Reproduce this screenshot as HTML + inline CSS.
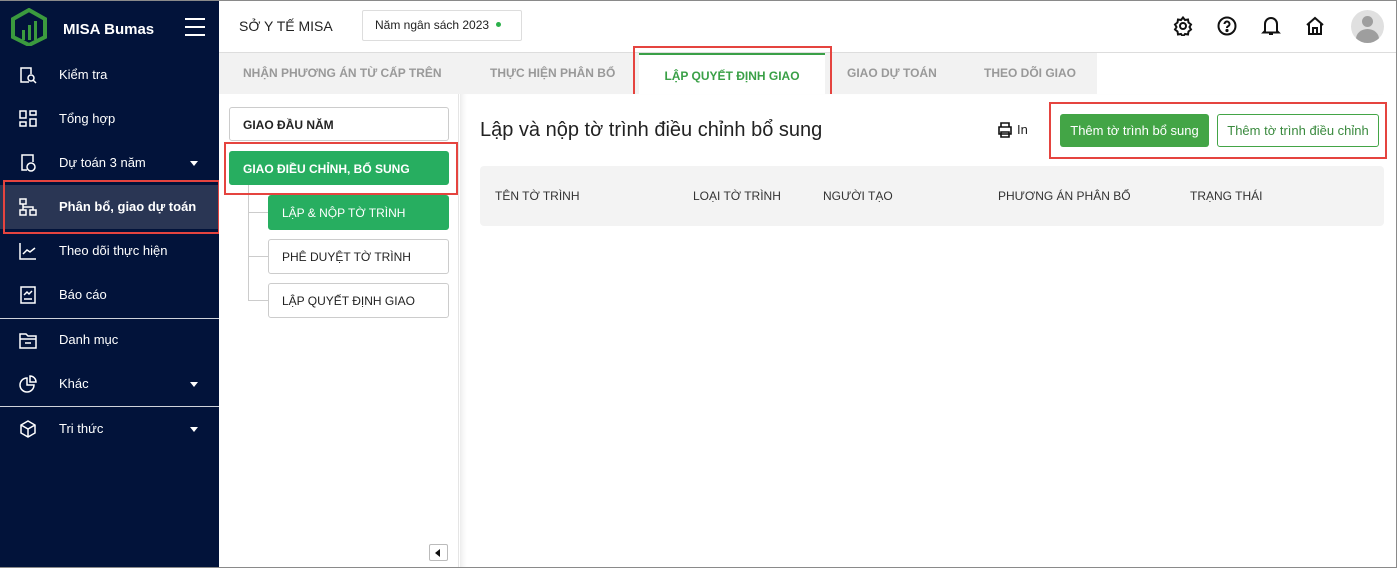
<!DOCTYPE html>
<html><head><meta charset="utf-8"><style>
*{box-sizing:border-box;margin:0;padding:0}
body{width:1397px;height:568px;overflow:hidden;font-family:"Liberation Sans",sans-serif;background:#fff;position:relative}
.frame{position:absolute;left:0;top:0;width:1397px;height:568px;border:1px solid #8a8a8a;border-left:none;pointer-events:none;z-index:10}
.side{position:absolute;left:0;top:0;width:219px;height:568px;background:#02133a;color:#fff}
.logo{position:absolute;left:10px;top:8px}
.brand{position:absolute;left:63px;top:21px;font-weight:bold;font-size:15px}
.ham{position:absolute;left:185px;top:18px;width:20px}
.ham i{display:block;height:2px;background:#fff;margin-bottom:6px}
.item{position:absolute;left:0;width:219px;height:44px;font-size:13px;line-height:44px;padding-left:59px}
.item svg{position:absolute;left:19px;top:13px}
.item .car{position:absolute;left:190px;top:20px;border:4px solid transparent;border-top:5px solid #fff}
.sel{background:#2a3654;font-weight:bold}
.sep{position:absolute;left:0;width:219px;height:1px;background:#cfd3da}
.red{position:absolute;border:2px solid #e5443f}
.top{position:absolute;left:219px;top:0;right:0;height:53px;border-bottom:1px solid #ddd;background:#fff}
.tabs{position:absolute;left:219px;top:53px;right:0;height:41px;background:#f2f2f2}
.tab{position:absolute;top:0;height:41px;line-height:40px;font-size:12px;color:#999;font-weight:bold}
.lp{position:absolute;left:219px;top:94px;width:240px;height:474px;background:#fff;border-right:1px solid #e5e5e5}
.btn{position:absolute;border:1px solid #ccc;border-radius:3px;font-size:12px;padding-left:13px;background:#fff;color:#222}
.g{background:#27ae60;color:#fff;border-color:#27ae60;font-weight:bold}
.main{position:absolute;left:460px;top:94px;width:924px;height:474px;background:#fff;box-shadow:inset 6px 0 6px -4px #e8e8e8}
.th{position:absolute;top:189px;font-size:12px;color:#333}
</style></head><body>
<div class="side">
 <svg class="logo" width="38" height="38" viewBox="0 0 38 38"><path d="M19 2 L35 11 V29 L19 37 L3 29 V11 Z" fill="none" stroke="#3b9a3e" stroke-width="4"/><rect x="12" y="22" width="3" height="10" fill="#3b9a3e"/><rect x="18" y="17" width="3" height="15" fill="#3b9a3e"/><rect x="24" y="13" width="3" height="19" fill="#3b9a3e"/></svg>
 <div class="brand">MISA Bumas</div>
 <div class="ham"><i></i><i></i><i></i></div>
 <div class="item" style="top:53px"><svg width="18" height="18" fill="none" stroke="#fff" stroke-width="1.5"><path d="M10 16H2V2h10v6"/><circle cx="12" cy="12" r="3"/><path d="M14 14l3 3"/></svg>Kiểm tra</div>
 <div class="item" style="top:97px"><svg width="18" height="18" fill="none" stroke="#fff" stroke-width="1.5"><rect x="1" y="1" width="6" height="7"/><rect x="11" y="1" width="6" height="4"/><rect x="1" y="12" width="6" height="4"/><rect x="11" y="9" width="6" height="7"/></svg>Tổng hợp</div>
 <div class="item" style="top:141px"><svg width="18" height="18" fill="none" stroke="#fff" stroke-width="1.5"><path d="M8 16H3V1h11v7"/><circle cx="12" cy="13" r="4"/></svg>Dự toán 3 năm<span class="car"></span></div>
 <div class="item sel" style="top:185px"><svg width="18" height="18" fill="none" stroke="#fff" stroke-width="1.5"><rect x="1" y="1" width="6" height="5"/><rect x="1" y="12" width="6" height="5"/><rect x="11" y="12" width="6" height="5"/><path d="M4 6v6M4 9h10v3"/></svg>Phân bổ, giao dự toán</div>
 <div class="item" style="top:229px"><svg width="18" height="18" fill="none" stroke="#fff" stroke-width="1.5"><path d="M1 1v16h16M4 12l4-4 3 2 5-4"/></svg>Theo dõi thực hiện</div>
 <div class="item" style="top:273px"><svg width="18" height="18" fill="none" stroke="#fff" stroke-width="1.5"><rect x="2" y="1" width="14" height="16"/><path d="M5 9l3-3 2 2 3-3M5 13h8"/></svg>Báo cáo</div>
 <div class="sep" style="top:318px"></div>
 <div class="item" style="top:318px"><svg width="18" height="18" fill="none" stroke="#fff" stroke-width="1.5"><path d="M1 3h6l2 2h8v12H1z M1 8h16M6 12h6"/></svg>Danh mục</div>
 <div class="item" style="top:362px"><svg width="18" height="18" fill="none" stroke="#fff" stroke-width="1.5"><path d="M8 3a7 7 0 1 0 7 7H8z M11 1v6h6a6 6 0 0 0-6-6z"/></svg>Khác<span class="car"></span></div>
 <div class="sep" style="top:406px"></div>
 <div class="item" style="top:407px"><svg width="18" height="18" fill="none" stroke="#fff" stroke-width="1.5"><path d="M9 1l7 4v8l-7 4-7-4V5z M2 5l7 4 7-4M9 9v8"/></svg>Tri thức<span class="car"></span></div>
</div>
<div class="red" style="left:3px;top:180px;width:217px;height:54px"></div>

<div class="top">
 <div style="position:absolute;left:20px;top:18px;font-size:14px;color:#222">SỞ Y TẾ MISA</div>
 <div style="position:absolute;left:143px;top:10px;width:160px;height:31px;border:1px solid #ddd;border-radius:2px;font-size:12px;line-height:29px;padding-left:12px;color:#222">Năm ngân sách 2023 <span style="display:inline-block;width:5px;height:5px;border-radius:50%;background:#2bb04a;margin-left:4px;vertical-align:2px"></span></div>
 <svg style="position:absolute;left:954px;top:16px" width="20" height="20" fill="none" stroke="#111" stroke-width="2"><circle cx="10" cy="10" r="3"/><path d="M10 1.5l2 2.5 3-.5 .5 3 2.5 2-1.5 2.5 1.5 2.5-2.5 2-.5 3-3-.5-2 2.5-2-2.5-3 .5-.5-3-2.5-2 1.5-2.5-1.5-2.5 2.5-2 .5-3 3 .5z"/></svg>
 <svg style="position:absolute;left:998px;top:16px" width="20" height="20" fill="none" stroke="#111" stroke-width="2"><circle cx="10" cy="10" r="8.5"/><path d="M7.5 8a2.5 2.5 0 1 1 3.5 2.3c-.7.4-1 .9-1 1.7"/><circle cx="10" cy="14.5" r=".6" fill="#111"/></svg>
 <svg style="position:absolute;left:1042px;top:16px" width="20" height="20" fill="none" stroke="#111" stroke-width="2"><path d="M4 15V8a6 6 0 0 1 12 0v7l1.5 1.5h-15z M8 18h4"/></svg>
 <svg style="position:absolute;left:1086px;top:16px" width="20" height="20" fill="none" stroke="#111" stroke-width="2"><path d="M2 9l8-7 8 7M4 8v10h12V8M8 18v-6h4v6"/></svg>
 <div style="position:absolute;left:1132px;top:10px;width:33px;height:33px;border-radius:50%;background:#e0e0e0;overflow:hidden"><div style="position:absolute;left:11px;top:6px;width:11px;height:11px;border-radius:50%;background:#9e9e9e"></div><div style="position:absolute;left:5px;top:19px;width:23px;height:20px;border-radius:50%;background:#9e9e9e"></div></div>
</div>

<div class="tabs">
 <div class="tab" style="left:24px">NHẬN PHƯƠNG ÁN TỪ CẤP TRÊN</div>
 <div class="tab" style="left:271px">THỰC HIỆN PHÂN BỔ</div>
 <div class="tab" style="left:420px;width:186px;background:#fff;border-top:2px solid #3aa047;color:#3aa047;text-align:center;line-height:42px">LẬP QUYẾT ĐỊNH GIAO</div>
 <div class="tab" style="left:628px">GIAO DỰ TOÁN</div>
 <div class="tab" style="left:765px">THEO DÕI GIAO</div>
 <div style="position:absolute;left:878px;top:0;right:0;height:41px;background:#fff"></div>
</div>
<div class="red" style="left:633px;top:46px;width:199px;height:55px"></div>

<div class="lp">
 <div class="btn" style="left:10px;top:13px;width:220px;height:34px;line-height:34px;font-weight:bold">GIAO ĐẦU NĂM</div>
 <div class="btn g" style="left:10px;top:57px;width:220px;height:34px;line-height:34px">GIAO ĐIỀU CHỈNH, BỔ SUNG</div>
 <div style="position:absolute;left:29px;top:91px;width:20px;height:115px;border-left:1px solid #ccc"></div>
 <div style="position:absolute;left:29px;top:118px;width:20px;border-top:1px solid #ccc"></div>
 <div style="position:absolute;left:29px;top:162px;width:20px;border-top:1px solid #ccc"></div>
 <div style="position:absolute;left:29px;top:206px;width:20px;border-top:1px solid #ccc"></div>
 <div class="btn g" style="left:49px;top:101px;width:181px;height:35px;line-height:35px;font-weight:normal">LẬP &amp; NỘP TỜ TRÌNH</div>
 <div class="btn" style="left:49px;top:145px;width:181px;height:35px;line-height:35px">PHÊ DUYỆT TỜ TRÌNH</div>
 <div class="btn" style="left:49px;top:189px;width:181px;height:35px;line-height:35px">LẬP QUYẾT ĐỊNH GIAO</div>
 <div style="position:absolute;left:210px;top:450px;width:19px;height:17px;border:1px solid #bbb;border-radius:2px"><div style="position:absolute;left:5px;top:4px;border:4px solid transparent;border-right:5px solid #111;border-left:none"></div></div>
</div>
<div class="red" style="left:224px;top:142px;width:234px;height:53px"></div>

<div class="main">
 <div style="position:absolute;left:20px;top:25px;font-size:20px;color:#222">Lập và nộp tờ trình điều chỉnh bổ sung</div>
 <svg style="position:absolute;left:537px;top:28px" width="16" height="16" fill="none" stroke="#111" stroke-width="1.6"><path d="M4 5V1h8v4M2 5h12v7H2z M4 10h8v5H4z"/></svg>
 <div style="position:absolute;left:557px;top:28px;font-size:13px;color:#222">In</div>
 <div style="position:absolute;left:600px;top:20px;width:149px;height:33px;background:#43a546;border-radius:3px;color:#fff;font-size:13px;text-align:center;line-height:33px">Thêm tờ trình bổ sung</div>
 <div style="position:absolute;left:757px;top:20px;width:162px;height:33px;border:1px solid #43a546;border-radius:3px;color:#3a8a3e;font-size:13px;text-align:center;line-height:31px">Thêm tờ trình điều chỉnh</div>
 <div style="position:absolute;left:20px;top:72px;width:904px;height:60px;background:#f3f3f3;border-radius:4px"></div>
</div>
<div class="red" style="left:1049px;top:102px;width:338px;height:57px"></div>
<div class="th" style="left:495px">TÊN TỜ TRÌNH</div>
<div class="th" style="left:693px">LOẠI TỜ TRÌNH</div>
<div class="th" style="left:823px">NGƯỜI TẠO</div>
<div class="th" style="left:998px">PHƯƠNG ÁN PHÂN BỔ</div>
<div class="th" style="left:1190px">TRẠNG THÁI</div>
<div class="frame"></div>
</body></html>
